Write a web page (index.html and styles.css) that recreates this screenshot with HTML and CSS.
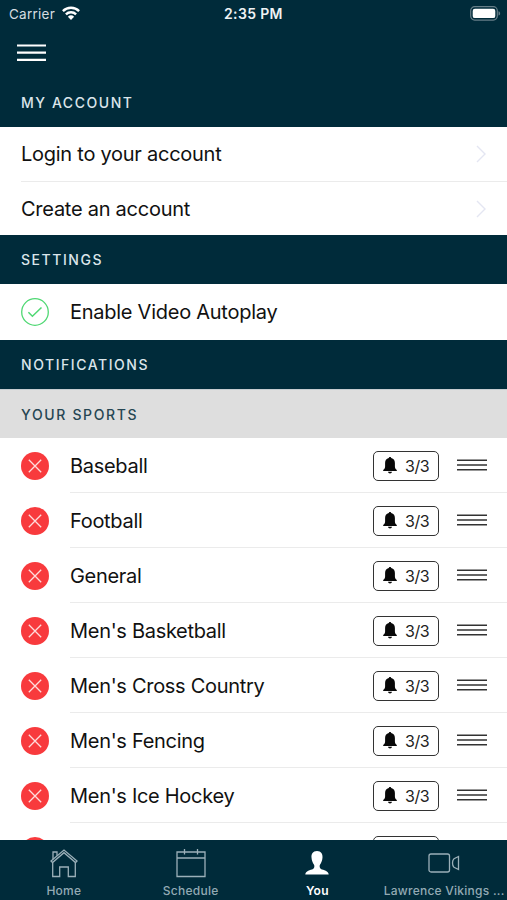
FILE: index.html
```
<!DOCTYPE html>
<html lang="en">
<head>
<meta charset="utf-8">
<title>You</title>
<link rel="stylesheet" href="styles.css">
</head>
<body>
<svg class="defs" aria-hidden="true">
  <symbol id="remove" viewBox="0 0 28 28"><circle cx="14" cy="14" r="14" fill="#f83a3d"/><path d="M7.800 7.800 20.200 20.200M20.200 7.800 7.800 20.200" stroke="#ffdcdc" stroke-width="1.300" fill="none"/></symbol>
  <symbol id="bell" viewBox="0 0 14 17"><path d="M7 0C6.200 0 5.900.5 5.800 1.100 3.200 1.700 2.100 3.600 2.100 6v3.200C2.100 11 1.500 12 .2 13v1h13.600v-1C12.500 12 11.900 11 11.900 9.200V6c0-2.400-1.100-4.300-3.700-4.900C8.100.5 7.800 0 7 0ZM5 14.700c.2 1 1 1.700 2 1.700s1.800-.7 2-1.700Z" fill="#080808"/></symbol>
  <symbol id="grip" viewBox="0 0 30 12"><path d="M0 1.300h30M0 6h30M0 10.700h30" stroke="#333" stroke-width="1.500"/></symbol>
  <symbol id="chevron" viewBox="0 0 10 18"><path d="M1 1 9 9 1 17" fill="none" stroke="#e4e6f2" stroke-width="1.400"/></symbol>
</svg>
<div class="screen">
  <header class="top">
    <div class="status">
      <span class="carrier">Carrier</span>
      <svg class="wifi" width="18" height="14" viewBox="0 0 18 14"><g fill="none" stroke="#fff" stroke-width="2.400"><path d="M.9 5.100a11.500 11.500 0 0 1 16.200 0"/><path d="M3.900 8.300a7.300 7.300 0 0 1 10.200 0"/></g><path d="M9 14 5.900 10.700a4.500 4.500 0 0 1 6.200 0Z" fill="#fff"/></svg>
      <span class="time">2:35 PM</span>
      <svg class="battery" width="31" height="15" viewBox="0 0 31 15"><rect x=".7" y=".7" width="26.600" height="13.400" rx="4" fill="none" stroke="#667e88" stroke-width="1.200"/><rect x="2.700" y="2.700" width="22.600" height="9.400" rx="2.200" fill="#fff"/><path d="M28.500 5.200c2.200.7 2.200 3.700 0 4.400Z" fill="#667e88"/></svg>
    </div>
    <svg class="menu" width="29" height="18" viewBox="0 0 29 18"><path d="M0 1.500h29M0 8.700h29M0 15.900h29" stroke="#fff" stroke-width="2.200"/></svg>
  </header>
  <main class="content">
    <h2 class="section">MY ACCOUNT</h2>
    <div class="row link"><span class="label">Login to your account</span><svg class="chev"><use href="#chevron"/></svg></div>
    <div class="row link last"><span class="label">Create an account</span><svg class="chev"><use href="#chevron"/></svg></div>
    <h2 class="section">SETTINGS</h2>
    <div class="row setting">
      <svg class="mark" viewBox="0 0 28 28"><circle cx="14" cy="14" r="13.300" fill="none" stroke="#4fd873" stroke-width="1.300"/><path d="m7.400 14.300 4 4L20.500 9.500" fill="none" stroke="#4fd873" stroke-width="1.500"/></svg>
      <span class="label">Enable Video Autoplay</span>
    </div>
    <h2 class="section">NOTIFICATIONS</h2>
    <h3 class="section sub">YOUR SPORTS</h3>
    <div class="row sport"><svg class="mark"><use href="#remove"/></svg><div class="body"><span class="label">Baseball</span><span class="badge"><svg class="bell"><use href="#bell"/></svg>3/3</span><svg class="grip"><use href="#grip"/></svg></div></div>
    <div class="row sport"><svg class="mark"><use href="#remove"/></svg><div class="body"><span class="label">Football</span><span class="badge"><svg class="bell"><use href="#bell"/></svg>3/3</span><svg class="grip"><use href="#grip"/></svg></div></div>
    <div class="row sport"><svg class="mark"><use href="#remove"/></svg><div class="body"><span class="label">General</span><span class="badge"><svg class="bell"><use href="#bell"/></svg>3/3</span><svg class="grip"><use href="#grip"/></svg></div></div>
    <div class="row sport"><svg class="mark"><use href="#remove"/></svg><div class="body"><span class="label">Men's Basketball</span><span class="badge"><svg class="bell"><use href="#bell"/></svg>3/3</span><svg class="grip"><use href="#grip"/></svg></div></div>
    <div class="row sport"><svg class="mark"><use href="#remove"/></svg><div class="body"><span class="label">Men's Cross Country</span><span class="badge"><svg class="bell"><use href="#bell"/></svg>3/3</span><svg class="grip"><use href="#grip"/></svg></div></div>
    <div class="row sport"><svg class="mark"><use href="#remove"/></svg><div class="body"><span class="label">Men's Fencing</span><span class="badge"><svg class="bell"><use href="#bell"/></svg>3/3</span><svg class="grip"><use href="#grip"/></svg></div></div>
    <div class="row sport"><svg class="mark"><use href="#remove"/></svg><div class="body"><span class="label">Men's Ice Hockey</span><span class="badge"><svg class="bell"><use href="#bell"/></svg>3/3</span><svg class="grip"><use href="#grip"/></svg></div></div>
    <div class="row sport"><svg class="mark"><use href="#remove"/></svg><div class="body"><span class="label"></span><span class="badge"></span><svg class="grip"></svg></div></div>
  </main>
  <nav class="tabs">
    <a class="tab"><svg width="28" height="30" viewBox="0 0 28 30"><g fill="none" stroke="#9bb0b9" stroke-width="1.300"><path d="M2.500 13.500 1 12 14 1l13 11-1.500 1.500L14 3.700Z"/><path d="M3 10.300V3h4v3.800M2.700 13.500V27.500h7V18h8.600v9.500h7V13.500"/></g></svg><span>Home</span></a>
    <a class="tab"><svg width="30" height="30" viewBox="0 0 30 30"><g fill="none" stroke="#9bb0b9" stroke-width="1.300"><path d="M1 3h28v24.500H1ZM1 9h28M8.500 0v5.500M21.500 0v5.500"/></g></svg><span>Schedule</span></a>
    <a class="tab active"><svg width="24" height="30" viewBox="0 0 24 30"><path d="M12 2C7.800 2 6.200 5 6.500 8.600c.2 3.200 1.300 5.400 2.400 7 .8 1.300.6 3.600-.8 4.300C5.400 21.200.5 21.500.3 25.500h23.400c-.2-4-5.100-4.300-7.800-5.600-1.400-.7-1.600-3-.8-4.300 1.100-1.600 2.200-3.800 2.400-7C17.800 5 16.200 2 12 2Z" fill="#fff"/></svg><span>You</span></a>
    <a class="tab"><svg width="32" height="30" viewBox="0 0 32 30"><g fill="none" stroke="#9bb0b9" stroke-width="1.300"><rect x="1" y="5" width="20.500" height="18" rx="2"/><path d="M30.500 7.500v13L26 18.300c-2-1.800-2-6.800 0-8.600Z"/></g></svg><span>Lawrence Vikings ...</span></a>
  </nav>
</div>
</body>
</html>
```
FILE: styles.css
```
* { box-sizing: border-box; }
body { margin: 0; background: #fff; font-family: Inter, "Liberation Sans", sans-serif; }
.defs { display: none; }
.screen { display: flex; flex-direction: column; width: 507px; height: 900px; overflow: hidden; background: #fff; }
.top { flex: none; height: 78px; background: #002b3a; }
.status { display: grid; grid-template-columns: 53px 1fr 60px 217px; align-items: center; height: 27px; padding: 0 6px 0 9px; color: #fff; font-size: 13.500px; }
.carrier { color: #d5dde0; letter-spacing: 0.250px; }
.wifi { margin-top: -1px; }
.time { font-size: 14px; font-weight: 600; letter-spacing: 0.350px; color: #eef2f4; white-space: nowrap; }
.battery { justify-self: end; }
.menu { display: block; margin: 17px 0 0 17px; }
.content { flex: 1; min-height: 0; overflow: hidden; }
.section { display: flex; align-items: center; height: 49px; margin: 0; padding: 0 21px; background: #002b3a; color: #dbe5ea; font-size: 14px; font-weight: 500; letter-spacing: 1.550px; }
.sub { height: 49px; border-top: 1px solid #c6cdd0; background: #dedede; color: #264653; letter-spacing: 1.650px; }
.row { display: flex; align-items: center; background: #fff; color: #111; font-size: 20px; }
.label { letter-spacing: -0.260px; white-space: nowrap; }
.link { height: 55px; margin-left: 21px; padding-right: 21px; justify-content: space-between; border-bottom: 1px solid #ebebeb; }
.link.last { height: 53px; border-bottom: 0; }
.chev { width: 10px; height: 18px; }
.setting { height: 56px; padding-left: 21px; gap: 21px; }
.mark { flex: none; width: 28px; height: 28px; }
.sport { height: 55px; padding-left: 21px; gap: 21px; }
.body { flex: 1; display: flex; align-items: center; height: 55px; padding: 2px 20px 0 0; border-bottom: 1px solid #ebebeb; }
.body .label { flex: 1; letter-spacing: -0.300px; }
.badge { display: flex; align-items: center; gap: 8px; width: 66px; height: 30px; margin: -1px 18px 0 0; padding-left: 9px; border: 1.500px solid #333; border-radius: 5px; color: #222; font-size: 16px; letter-spacing: -0.400px; }
.bell { width: 14px; height: 17px; }
.grip { width: 30px; height: 12px; margin-top: -2px; }
.tabs { flex: none; display: grid; grid-template-columns: repeat(4, 1fr); height: 60px; background: #002b3a; }
.tab { display: flex; flex-direction: column; align-items: center; padding: 9px 0 0 1px; color: #93aab4; font-size: 12px; font-weight: 500; letter-spacing: 0.250px; }
.tab svg { flex: none; }
.tab span { margin-top: 4px; line-height: 15px; white-space: nowrap; }
.active { color: #fff; font-weight: 600; }
```
